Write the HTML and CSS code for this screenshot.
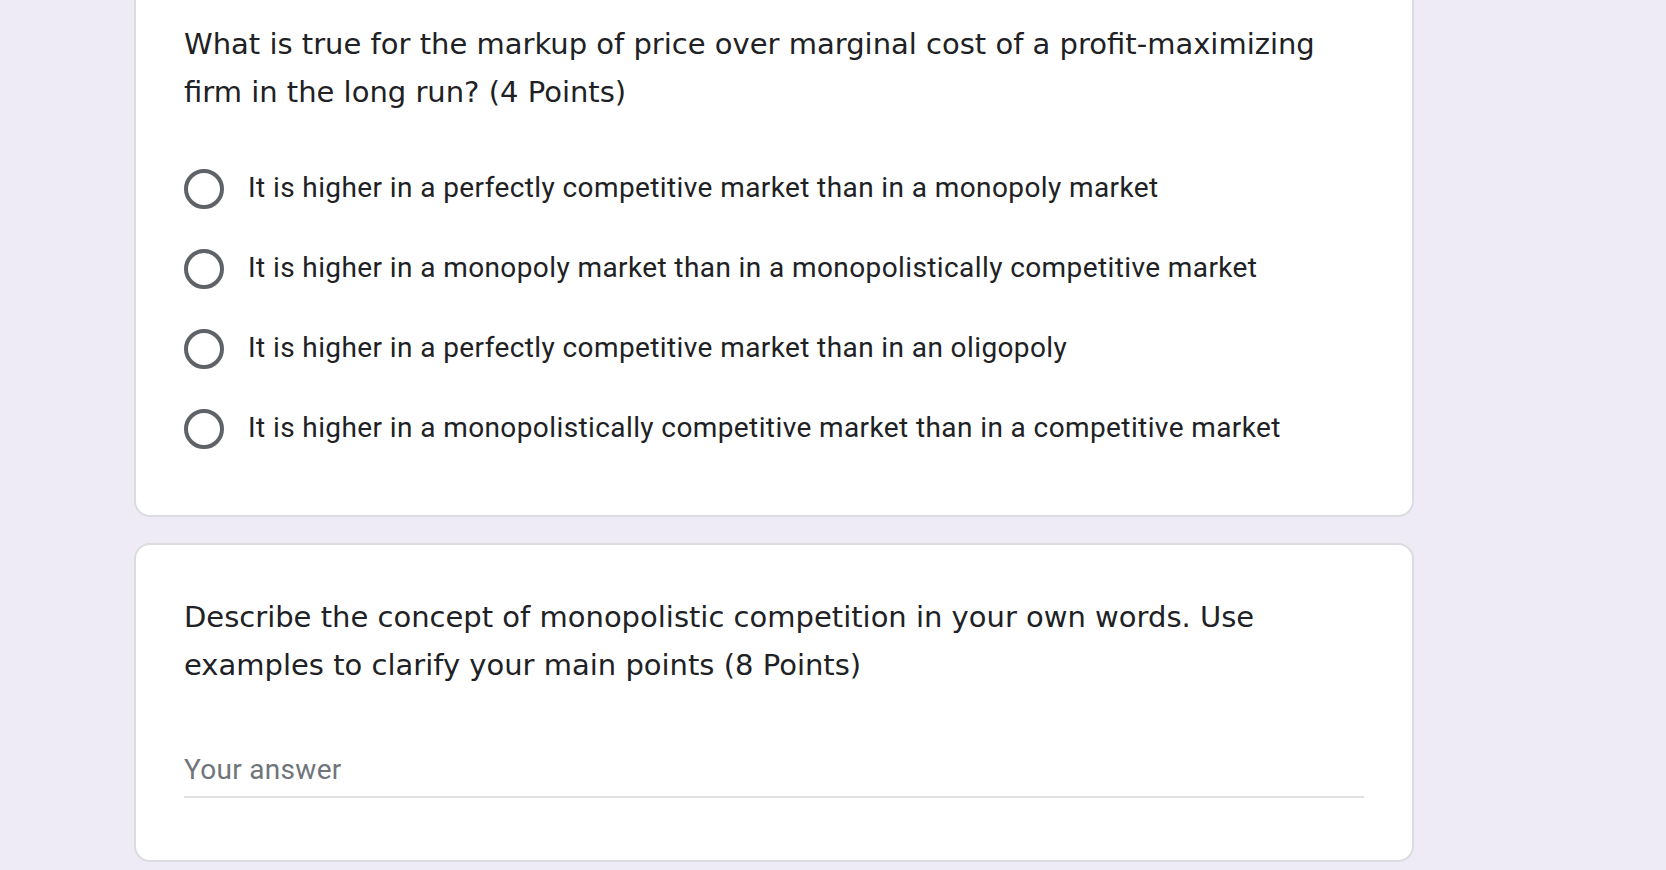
FILE: index.html
```html
<!DOCTYPE html>
<html lang="en">
<head>
<meta charset="utf-8">
<title>Form</title>
<link rel="stylesheet" href="styles.css">
</head>
<body>
<main class="form">
  <section class="card card-first">
    <div class="q-title">What is true for the markup of price over marginal cost of a profit-maximizing firm in the long run? (4 Points)</div>
    <div class="options">
      <label class="option"><span class="radio"></span><span class="opt-text">It is higher in a perfectly competitive market than in a monopoly market</span></label>
      <label class="option"><span class="radio"></span><span class="opt-text">It is higher in a monopoly market than in a monopolistically competitive market</span></label>
      <label class="option"><span class="radio"></span><span class="opt-text">It is higher in a perfectly competitive market than in an oligopoly</span></label>
      <label class="option"><span class="radio"></span><span class="opt-text">It is higher in a monopolistically competitive market than in a competitive market</span></label>
    </div>
  </section>
  <section class="card">
    <div class="q-title">Describe the concept of monopolistic competition in your own words. Use examples to clarify your main points (8 Points)</div>
    <div class="answer">
      <div class="placeholder">Your answer</div>
    </div>
  </section>
</main>
</body>
</html>
```

FILE: styles.css
```css
html, body {
  margin: 0;
  padding: 0;
  background: #eeebf7;
  overflow: hidden;
}

.form {
  display: flex;
  flex-direction: column;
  gap: 26px;
  width: 1280px;
  margin-left: 134px;
}

.card {
  box-sizing: border-box;
  width: 1280px;
  background: #ffffff;
  border: 2px solid #dadce0;
  border-radius: 16px;
  padding: 48px;
}

.card-first {
  margin-top: -30px;
  padding-bottom: 66px;
}

.q-title {
  font-family: "DejaVu Sans", sans-serif;
  font-size: 29px;
  line-height: 48px;
  color: #202124;
}

.options {
  display: flex;
  flex-direction: column;
  gap: 40px;
  margin-top: 53px;
}

.option {
  display: flex;
  align-items: center;
  gap: 24px;
  height: 40px;
}

.radio {
  box-sizing: border-box;
  flex: none;
  width: 40px;
  height: 40px;
  border: 4px solid #5f6368;
  border-radius: 50%;
}

.opt-text {
  font-family: Roboto, sans-serif;
  font-size: 28px;
  line-height: 40px;
  color: #202124;
  letter-spacing: 0.4px;
  margin-top: -2px;
}

.answer {
  margin-top: 61px;
  margin-bottom: 14px;
  padding-bottom: 6px;
  border-bottom: 2px solid #e0e0e0;
}

.placeholder {
  font-family: Roboto, sans-serif;
  font-size: 28px;
  line-height: 40px;
  color: #70757a;
  letter-spacing: 0.3px;
}
```
